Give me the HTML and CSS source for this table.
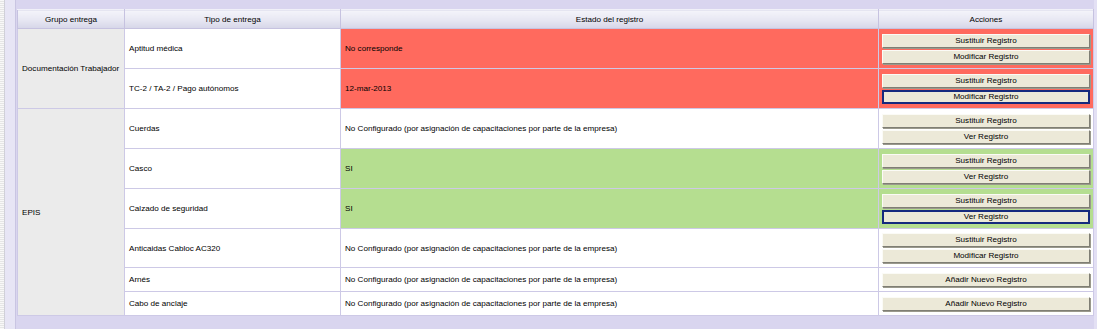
FILE: index.html
```html
<!DOCTYPE html>
<html>
<head>
<meta charset="utf-8">
<link rel="stylesheet" href="styles.css">
</head>
<body>
<div class="page">
  <div class="gutter"></div>
  <div class="side"></div>
  <div class="panel">
    <table class="grid">
      <colgroup>
        <col class="c-grupo"><col class="c-tipo"><col class="c-estado"><col class="c-acc">
      </colgroup>
      <thead>
        <tr><th>Grupo entrega</th><th>Tipo de entrega</th><th>Estado del registro</th><th>Acciones</th></tr>
      </thead>
      <tbody>
        <tr class="r2">
          <td class="grupo" rowspan="2">Documentación Trabajador</td>
          <td>Aptitud médica</td>
          <td class="red">No corresponde</td>
          <td class="acc red"><button class="btn">Sustituir Registro</button><button class="btn">Modificar Registro</button></td>
        </tr>
        <tr class="r2">
          <td>TC-2 / TA-2 / Pago autónomos</td>
          <td class="red">12-mar-2013</td>
          <td class="acc red"><button class="btn">Sustituir Registro</button><button class="btn focus">Modificar Registro</button></td>
        </tr>
        <tr class="r2">
          <td class="grupo" rowspan="6">EPIS</td>
          <td>Cuerdas</td>
          <td>No Configurado (por asignación de capacitaciones por parte de la empresa)</td>
          <td class="acc"><button class="btn">Sustituir Registro</button><button class="btn">Ver Registro</button></td>
        </tr>
        <tr class="r2">
          <td>Casco</td>
          <td class="green">SI</td>
          <td class="acc green"><button class="btn">Sustituir Registro</button><button class="btn">Ver Registro</button></td>
        </tr>
        <tr class="r2">
          <td>Calzado de seguridad</td>
          <td class="green">SI</td>
          <td class="acc green"><button class="btn">Sustituir Registro</button><button class="btn focus">Ver Registro</button></td>
        </tr>
        <tr class="r2b">
          <td>Anticaidas Cabloc AC320</td>
          <td>No Configurado (por asignación de capacitaciones por parte de la empresa)</td>
          <td class="acc"><button class="btn">Sustituir Registro</button><button class="btn">Modificar Registro</button></td>
        </tr>
        <tr class="r1">
          <td>Arnés</td>
          <td>No Configurado (por asignación de capacitaciones por parte de la empresa)</td>
          <td class="acc"><button class="btn">Añadir Nuevo Registro</button></td>
        </tr>
        <tr class="r1">
          <td>Cabo de anclaje</td>
          <td>No Configurado (por asignación de capacitaciones por parte de la empresa)</td>
          <td class="acc"><button class="btn">Añadir Nuevo Registro</button></td>
        </tr>
      </tbody>
    </table>
  </div>
</div>
</body>
</html>
```

FILE: styles.css
```css
html, body {
  margin: 0;
  padding: 0;
  background: #f6f6f6;
  font-family: "Liberation Sans", Arial, sans-serif;
  font-size: 8.1px;
  color: #000;
}
.page {
  display: flex;
  height: 329px;
  overflow: hidden;
}
.gutter {
  flex: 0 0 4px;
  background: repeating-linear-gradient(to bottom, #f8f8f8 0 1px, #e6e6e6 1px 2px);
  border-right: 1px solid #d0d0d8;
}
.side {
  flex: 0 0 10px;
  background: #e7e5f5;
  border-right: 1px solid #c9c5e2;
}
.panel {
  flex: 1 1 auto;
  min-width: 0;
  background: #d9d5ef;
  padding: 9px 1px 13px 1px;
  border-right: 3px solid #e3e0f4;
}
.grid {
  width: 1076px;
  border-collapse: collapse;
  table-layout: fixed;
}
.c-grupo { width: 107px; }
.c-tipo { width: 216px; }
.c-estado { width: 538px; }
.c-acc { width: 215px; }
.grid th {
  height: 18px;
  padding: 0;
  font-weight: normal;
  text-align: center;
  background: linear-gradient(to bottom, #f4f4fa 0%, #e8e8f3 50%, #d6d6e8 100%);
  border: 1px solid #c6c2e0;
  border-top-color: #f0f0f8;
}
.grid td {
  padding: 0 4px;
  background: #fff;
  border: 1px solid #cdc9e6;
  vertical-align: middle;
  white-space: nowrap;
}
.grid td.grupo {
  background: #ebebeb;
  padding-left: 4px;
}
.r2 td { height: 39px; }
.r2b td { height: 38px; }
.r1 td { height: 23px; }
.grid td.red { background: #ff6a5e; }
.grid td.green { background: #b5de90; }
.grid td.acc {
  padding: 0 3px 0 3px;
}
.btn {
  display: block;
  width: 208px;
  height: 14px;
  margin: 2px 0;
  padding: 0;
  font-family: "Liberation Sans", Arial, sans-serif;
  font-size: 8.1px;
  color: #000;
  background: #ece9d8;
  border: 1px solid;
  border-color: #fbfbf6 #7f7e74 #7f7e74 #fbfbf6;
  box-shadow: 1px 1px 0 #9a998c;
  line-height: 12px;
  text-align: center;
  cursor: pointer;
}
.btn.focus {
  border: 2px solid #152a7e;
  box-shadow: none;
  line-height: 10px;
}
```
